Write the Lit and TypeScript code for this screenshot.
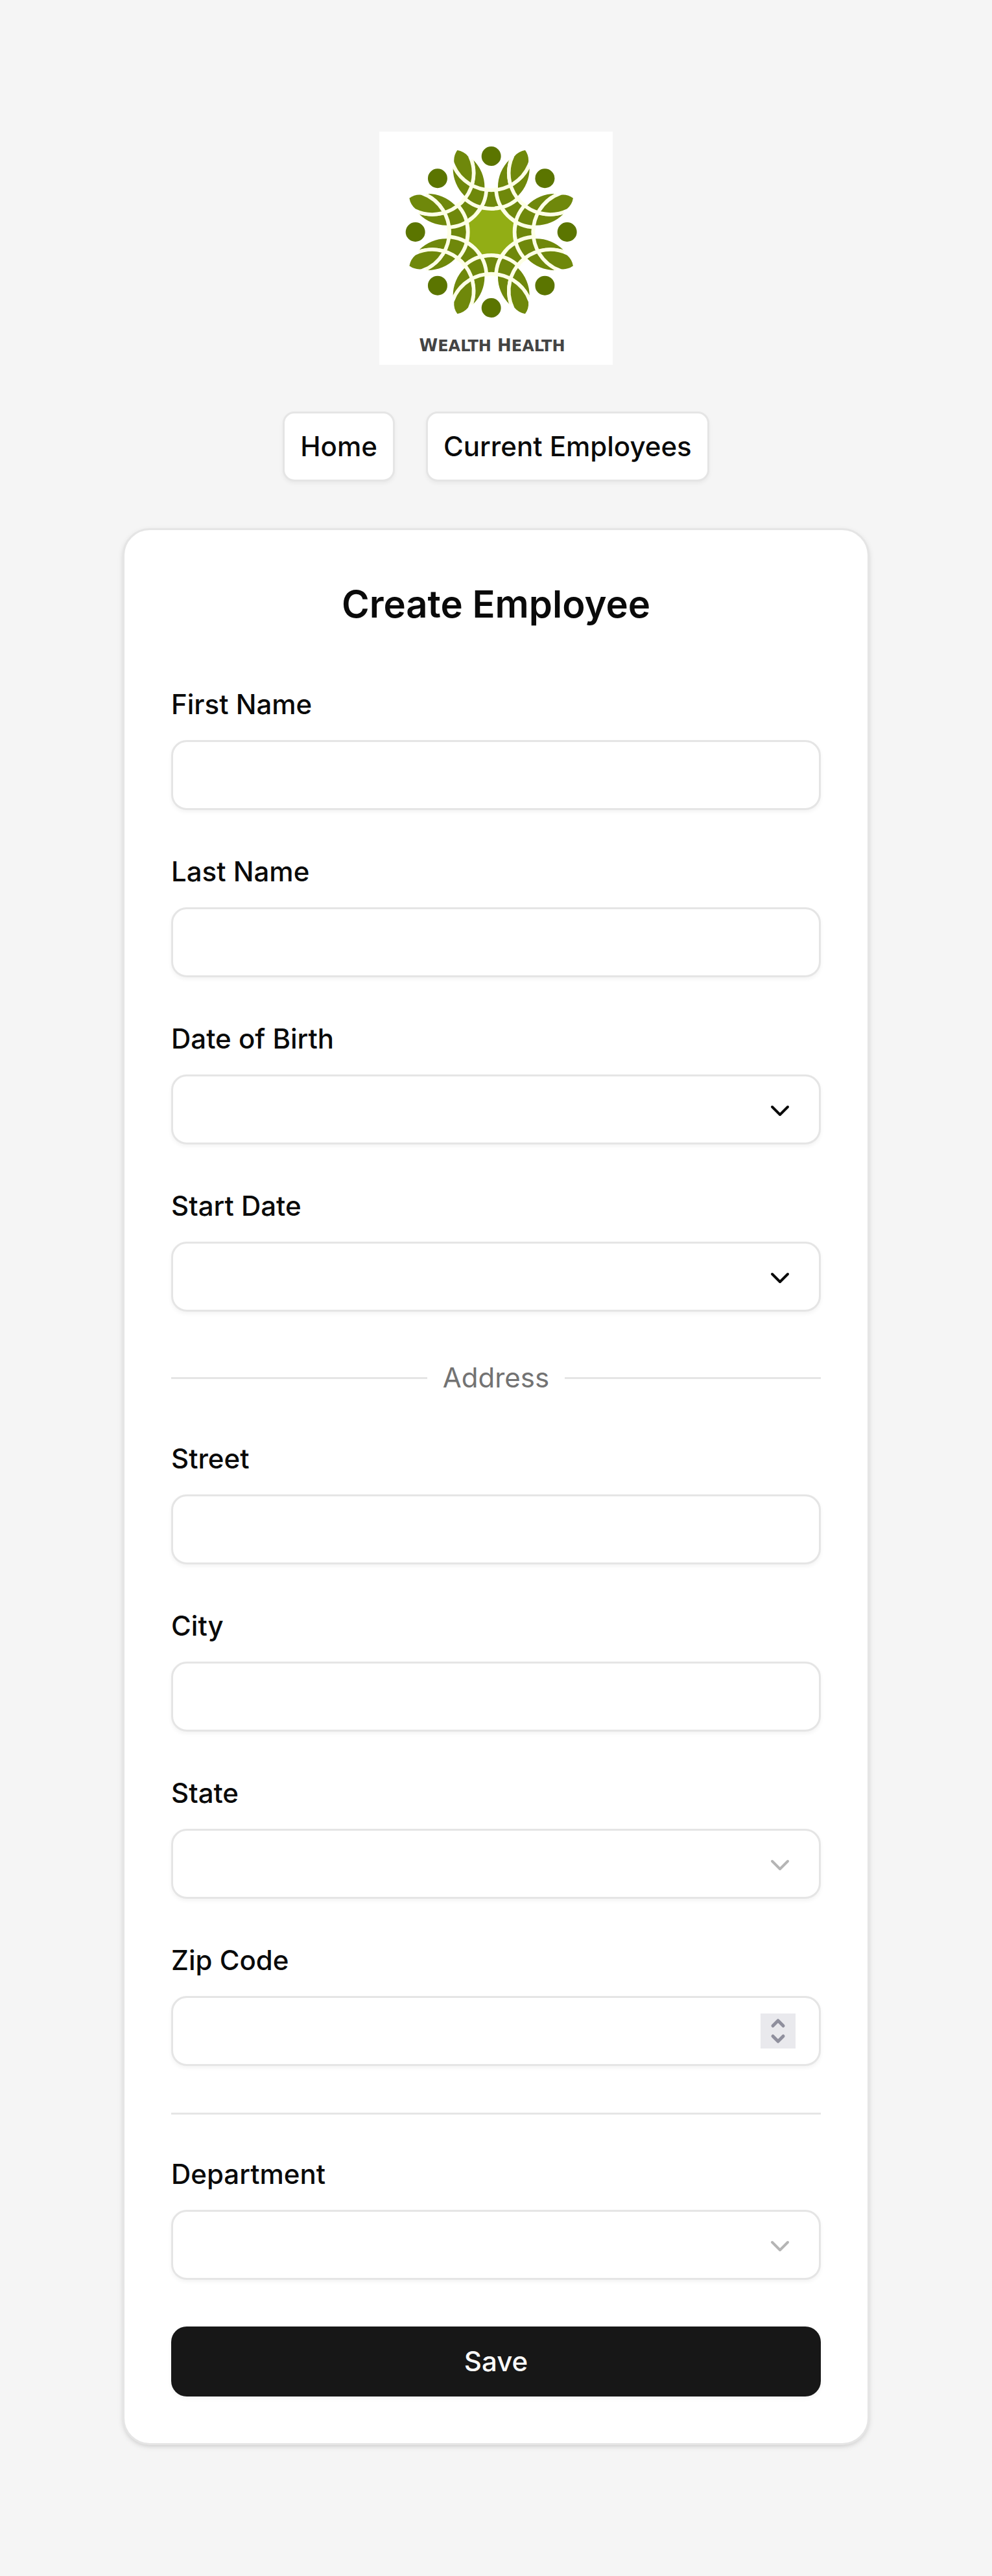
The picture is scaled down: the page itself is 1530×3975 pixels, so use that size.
import { LitElement, html, svg, css, nothing } from "lit";
import { customElement, property } from "lit/decorators.js";

const TURNS = [0, 45, 90, 135, 180, 225, 270, 315];

/* Brand mark: eight figures in a ring, each a head, two raised arms and a leaf. */
@customElement("brand-logo")
export class BrandLogo extends LitElement {
  static styles = css`
    :host {
      display: block;
      width: 360px;
      max-width: 100%;
    }
    .logo {
      display: block;
      width: 100%;
      height: auto;
      background: #fff;
    }
    .core {
      fill: #92ae15;
    }
    .arm,
    .leaf {
      fill: #6f880b;
    }
    .head {
      fill: #5b7500;
    }
    .line {
      fill: none;
      stroke: #fdffe6;
      stroke-width: 17;
    }
    .name {
      font-family: "DejaVu Sans", sans-serif;
      font-size: 26px;
      font-weight: 700;
      fill: #444;
    }
    .small {
      font-size: 24px;
    }
  `;

  render() {
    return html`
      <svg class="logo" viewBox="0 0 360 360" role="img" aria-label="Wealth Health">
        <g transform="scale(0.33333) translate(518 465)">
          <circle class="core" r="118" />
          ${TURNS.map(
            (a) => svg`<path class="arm" transform="rotate(${a})"
              d="M-177-294A177 177 0 0 0 177-294A199 199 0 0 1-177-294Z" />`
          )}
          ${TURNS.map(
            (a) => svg`<g class="line" transform="rotate(${a})">
              <path d="M-130-161A185 185 0 0 0 130-161" />
              <path d="M-172-302A191 191 0 0 0 172-302" />
            </g>`
          )}
          ${TURNS.map(
            (a) => svg`<path class="leaf" transform="rotate(${a - 67.5})"
              d="M248 0A183 183 0 0 0 365 35Q394 26 410 0Q394-26 365-35A183 183 0 0 0 248 0Z" />`
          )}
          ${TURNS.map(
            (a) => svg`<circle class="head" cy="-351" r="45" transform="rotate(${a})" />`
          )}
        </g>
        <text class="name" x="174" y="339" text-anchor="middle">W<tspan class="small">EALTH</tspan> H<tspan class="small">EALTH</tspan></text>
      </svg>
    `;
  }
}

type Kind = "text" | "number" | "date" | "select";

@customElement("form-field")
export class FormField extends LitElement {
  @property() label = "";
  @property() kind: Kind = "text";

  static styles = css`
    :host {
      display: flex;
      flex-direction: column;
      gap: 32px;
    }
    .label {
      align-self: flex-start;
      font-size: 42px;
      font-weight: 500;
      line-height: 46px;
    }
    .box {
      display: grid;
      align-items: center;
    }
    .box > * {
      grid-area: 1 / 1;
    }
    .control {
      appearance: none;
      box-sizing: border-box;
      width: 100%;
      height: 108px;
      margin: 0;
      padding: 12px 36px;
      border: 3px solid #e5e5e5;
      border-radius: 24px;
      background: #fff;
      box-shadow: 0 3px 6px rgba(0, 0, 0, 0.05);
      color: inherit;
      font: inherit;
      font-size: 42px;
      text-align: left;
    }
    .control::-webkit-inner-spin-button {
      appearance: none;
    }
    .icon {
      justify-self: end;
      margin-right: 39px;
      pointer-events: none;
      fill: none;
      stroke: currentColor;
      stroke-linecap: round;
      stroke-linejoin: round;
    }
    .chevron {
      width: 48px;
      height: 48px;
      margin-top: 4px;
      stroke-width: 2;
    }
    .faded {
      color: #b5b5b5;
    }
    .stepper {
      width: 54px;
      height: 54px;
      background: #e9e9ed;
      color: #8f8f9d;
      stroke-width: 5;
    }
  `;

  private chevron(faded: boolean) {
    return html`<svg class="icon chevron ${faded ? "faded" : ""}" viewBox="0 0 24 24" aria-hidden="true">
      <path d="m6 9 6 6 6-6" />
    </svg>`;
  }

  private control() {
    switch (this.kind) {
      case "date":
        return html`<button id="control" class="control" type="button" aria-haspopup="dialog"></button>
          ${this.chevron(false)}`;
      case "select":
        return html`<select id="control" class="control"><option></option></select>
          ${this.chevron(true)}`;
      default:
        return html`<input id="control" class="control" type=${this.kind} />
          ${this.kind === "number"
            ? html`<svg class="icon stepper" viewBox="0 0 54 54" aria-hidden="true">
                <path d="m19 19 8-8 8 8M19 35l8 8 8-8" />
              </svg>`
            : nothing}`;
    }
  }

  render() {
    return html`
      <label class="label" for="control">${this.label}</label>
      <div class="box">${this.control()}</div>
    `;
  }
}

@customElement("app-root")
export class AppRoot extends LitElement {
  static styles = css`
    :host {
      display: block;
      background: #f5f5f5;
      color: #0a0a0a;
      font-family: Inter, "Liberation Sans", sans-serif;
      font-size: 42px;
      line-height: 60px;
    }
    .page {
      display: flex;
      flex-direction: column;
      align-items: center;
      gap: 72px;
      padding: 203px 72px 202px;
    }
    .nav {
      display: flex;
      flex-wrap: wrap;
      justify-content: center;
      gap: 48px;
    }
    .link {
      display: flex;
      align-items: center;
      box-sizing: border-box;
      height: 108px;
      padding: 0 24px;
      border: 3px solid #e5e5e5;
      border-radius: 18px;
      background: #fff;
      box-shadow: 0 3px 6px rgba(0, 0, 0, 0.05);
      color: inherit;
      font-weight: 500;
      text-decoration: none;
    }
    .card {
      box-sizing: border-box;
      width: 100%;
      max-width: 1152px;
      padding: 72px;
      border: 3px solid #e5e5e5;
      border-radius: 42px;
      background: #fff;
      box-shadow: 0 3px 9px rgba(0, 0, 0, 0.1), 0 3px 6px -3px rgba(0, 0, 0, 0.1);
    }
    .title {
      margin: 0 0 90px;
      font-size: 58px;
      font-weight: 600;
      line-height: 84px;
      text-align: center;
    }
    .form {
      display: flex;
      flex-direction: column;
      gap: 72px;
    }
    .divider {
      display: flex;
      align-items: center;
      gap: 24px;
      color: #737373;
    }
    .divider::before,
    .divider::after {
      content: "";
      flex: 1;
      height: 3px;
      background: #e5e5e5;
    }
    .rule {
      width: 100%;
      height: 3px;
      margin: 0 0 -3px;
      border: 0;
      background: #e5e5e5;
    }
    .save {
      height: 108px;
      border: 0;
      border-radius: 24px;
      background: #171717;
      box-shadow: 0 3px 6px rgba(0, 0, 0, 0.05);
      color: #fafafa;
      font: inherit;
      font-weight: 500;
    }
  `;

  render() {
    return html`
      <main class="page">
        <brand-logo></brand-logo>
        <nav class="nav">
          <a class="link" href="#home">Home</a>
          <a class="link" href="#employees">Current Employees</a>
        </nav>
        <section class="card">
          <h1 class="title">Create Employee</h1>
          <form class="form" @submit=${(e: Event) => e.preventDefault()}>
            <form-field label="First Name"></form-field>
            <form-field label="Last Name"></form-field>
            <form-field label="Date of Birth" kind="date"></form-field>
            <form-field label="Start Date" kind="date"></form-field>
            <div class="divider">Address</div>
            <form-field label="Street"></form-field>
            <form-field label="City"></form-field>
            <form-field label="State" kind="select"></form-field>
            <form-field label="Zip Code" kind="number"></form-field>
            <hr class="rule" />
            <form-field label="Department" kind="select"></form-field>
            <button class="save" type="submit">Save</button>
          </form>
        </section>
      </main>
    `;
  }
}
